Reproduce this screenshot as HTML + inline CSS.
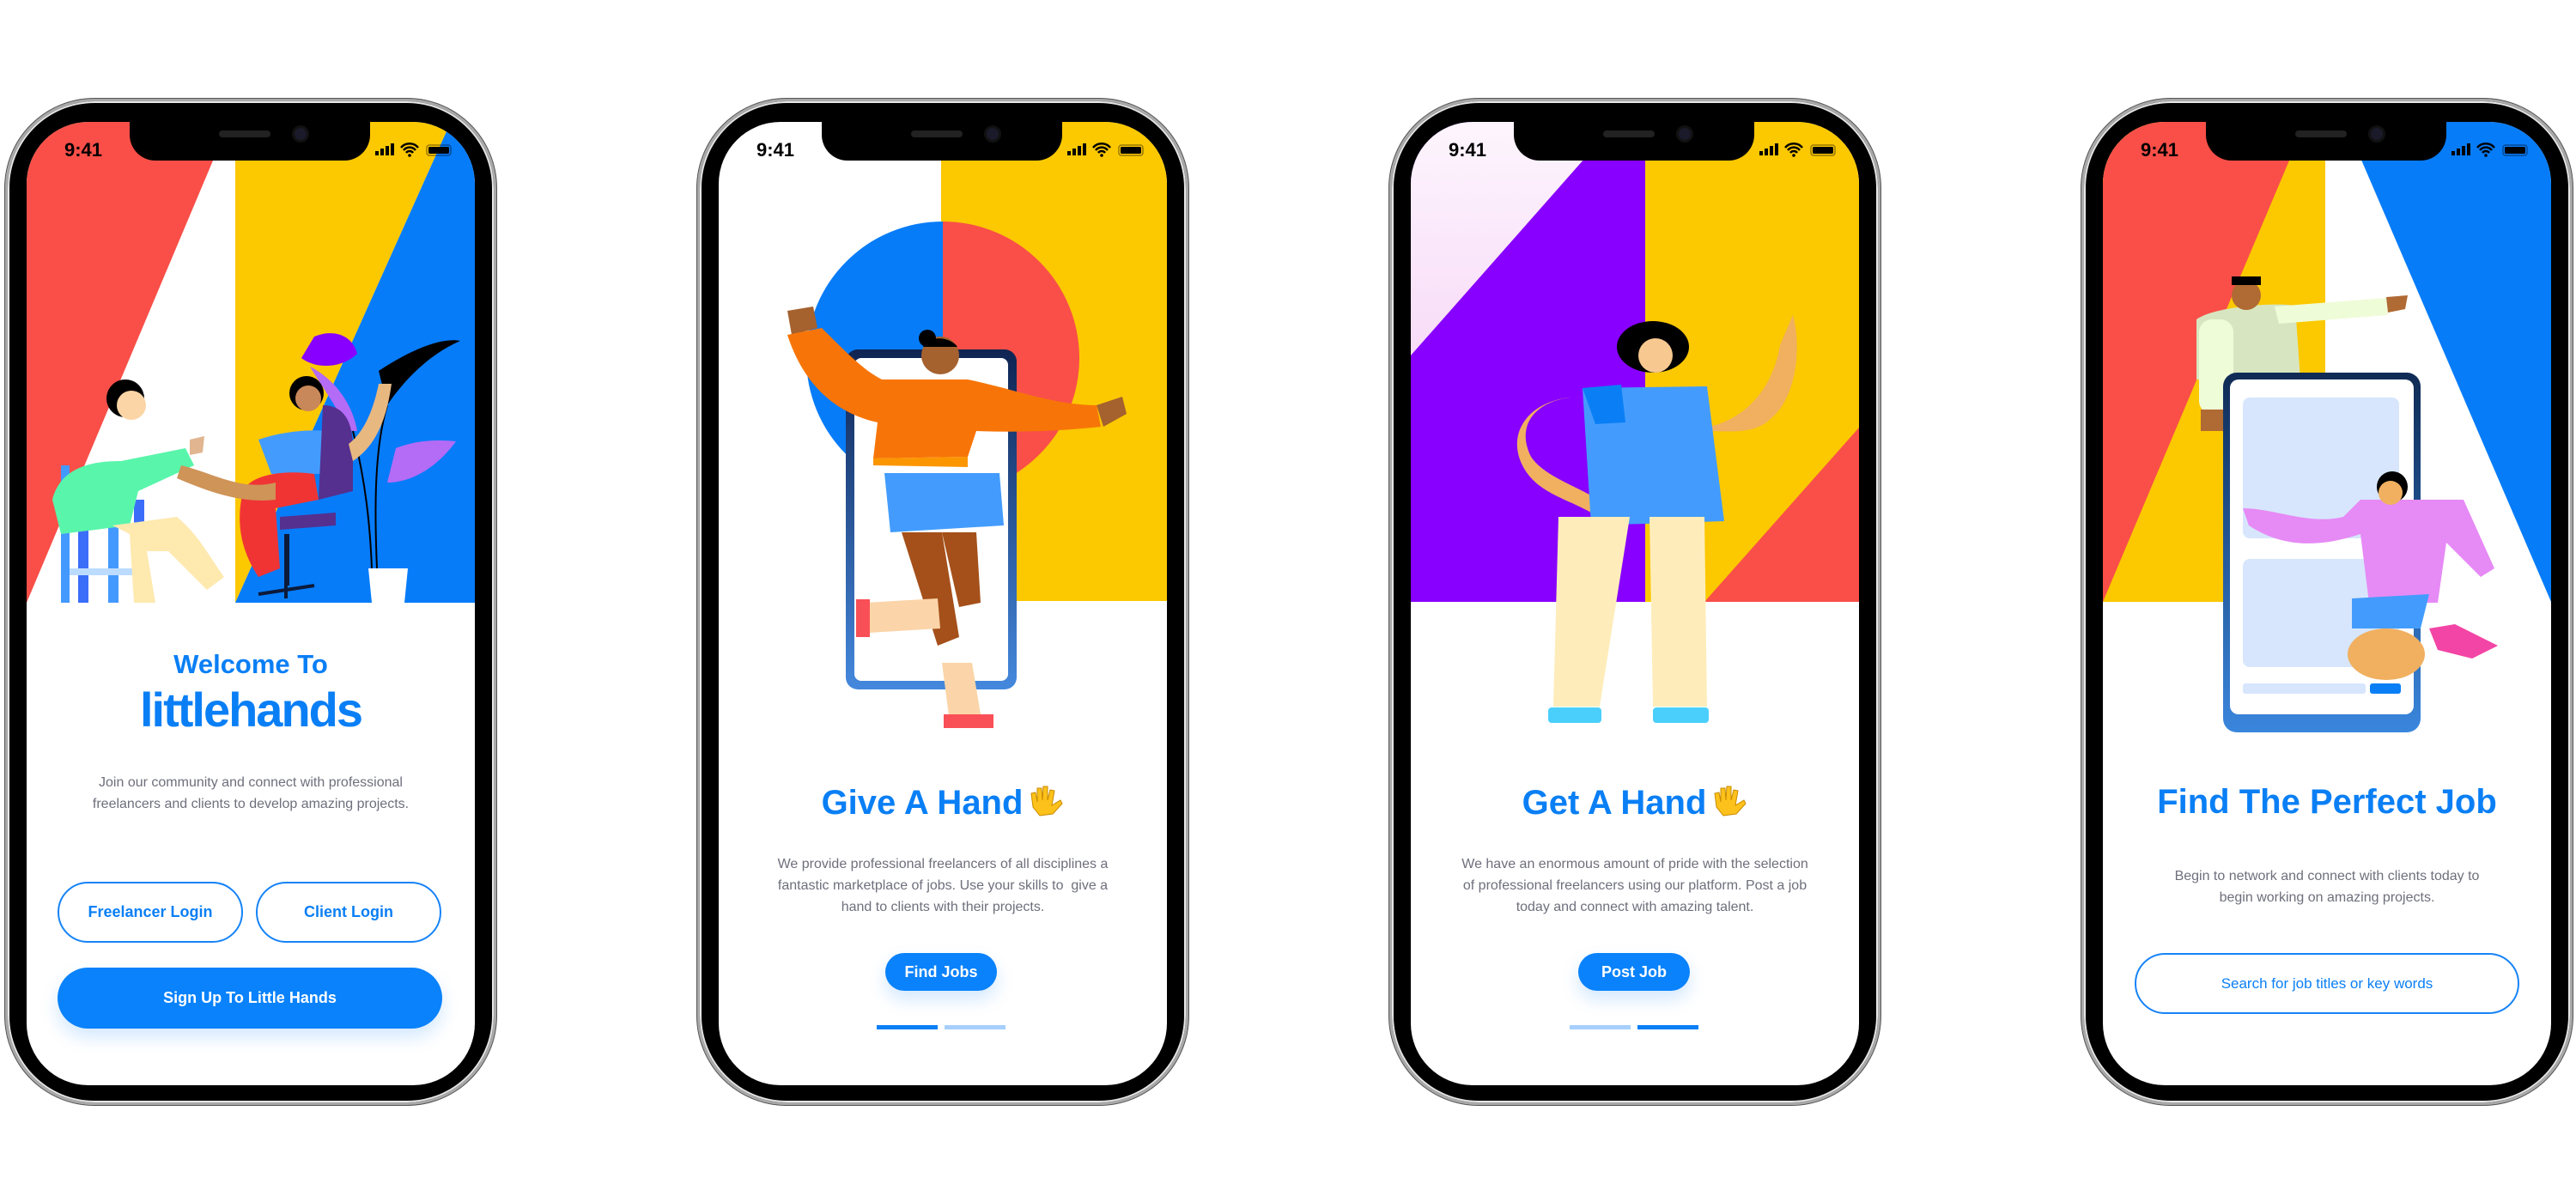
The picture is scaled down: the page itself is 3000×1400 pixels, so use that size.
<!DOCTYPE html>
<html><head><meta charset="utf-8">
<style>
*{margin:0;padding:0;box-sizing:border-box}
body{width:3000px;height:1400px;background:#fff;position:relative;overflow:hidden;font-family:"Liberation Sans",sans-serif}
.ph{position:absolute;top:115px;width:572px;height:1172px;border-radius:104px;background:#000;border:3px solid #a9a9a9;box-shadow:0 0 0 2px #e6e6e6 inset,0 0 0 1px #555}
.sc{position:absolute;left:22px;top:24px;width:522px;height:1122px;border-radius:72px;overflow:hidden;background:#fff}
.notch{position:absolute;left:120px;top:0;width:280px;height:45px;background:#000;border-radius:0 0 30px 30px}
.notch:before{content:"";position:absolute;left:104px;top:10px;width:60px;height:8px;border-radius:4px;background:#222}
.notch:after{content:"";position:absolute;left:192px;top:7px;width:14px;height:14px;border-radius:50%;background:#1a1a2a;box-shadow:0 0 0 3px #111}
.time{position:absolute;left:44px;top:20px;font-weight:bold;font-size:22px;color:#000}
.ic{position:absolute;left:404px;top:25px}
.t{position:absolute;left:0;width:522px;text-align:center}
.h{color:#0a7ff5;font-weight:bold;font-size:40px}
.h svg.em{position:static;display:inline-block;vertical-align:-4px;margin-left:8px}
.p{color:#6e6f7c;font-size:16px;line-height:25px}
.b{position:absolute;border-radius:40px;font-weight:bold;color:#0a7ff5;font-size:18px;text-align:center}
.o{border:2px solid #1683f7;background:#fff}
.f{background:#0982fb;color:#fff;box-shadow:0 10px 20px rgba(9,130,251,.18)}
svg{position:absolute;left:0;top:0}
</style></head><body>

<!-- PHONE 1 -->
<div class="ph" style="left:6px"><div class="sc">
<svg width="522" height="1122">
<polygon points="0,0 236,0 0,560" fill="#f94f48"/>
<polygon points="243,0 494,0 243,560" fill="#fcc800"/>
<polygon points="494,0 522,0 522,560 243,560" fill="#077cf9"/>
<path d="M335,250 C360,240 380,250 385,270 C370,285 340,290 320,275 Z" fill="#8800ff"/>
<path d="M330,285 C360,300 380,330 385,360 L375,360 C360,330 345,310 330,285Z" fill="#b46bf5"/>
<path d="M430,380 C455,370 480,370 500,372 C480,400 450,420 420,420Z" fill="#b46bf5"/>
<path d="M410,290 C440,270 480,250 505,255 C470,270 440,300 420,330Z" fill="#000"/>
<path d="M420,330 C405,380 405,450 408,520 M380,360 C395,420 400,470 402,520" stroke="#000" stroke-width="2" fill="none"/>
<path d="M398,520 L444,520 L440,560 L402,560Z" fill="#fff"/>
<rect x="40" y="400" width="10" height="160" fill="#4499ff"/><rect x="60" y="440" width="12" height="120" fill="#3b6ef8"/>
<rect x="95" y="440" width="12" height="120" fill="#4499ff"/><rect x="125" y="440" width="12" height="120" fill="#3b6ef8"/>
<rect x="50" y="520" width="90" height="8" fill="#bcdcff"/>
<path d="M30,440 C40,400 80,395 110,395 L185,380 L195,400 L130,430 L120,470 L40,480 Z" fill="#59f5ab"/>
<path d="M100,470 L175,460 C200,480 215,510 230,530 L210,545 L165,500 L140,500 L150,560 L125,560 L120,480Z" fill="#fee9af"/>
<circle cx="115" cy="322" r="22" fill="#000"/><circle cx="122" cy="330" r="17" fill="#fbd5a5"/>
<path d="M190,370 L207,366 L205,385 L190,388Z" fill="#e0b590"/>
<path d="M270,370 C300,360 330,358 355,360 L370,360 L365,410 L285,410 Z" fill="#439cfd"/>
<path d="M250,440 C250,410 300,405 335,410 L340,440 L290,450 L295,520 L270,530 C250,500 245,470 250,440Z" fill="#f03434"/>
<path d="M345,330 C370,330 380,350 380,380 L380,430 L340,440 Z" fill="#55308f"/>
<path d="M295,460 L360,455 L360,470 L295,475Z" fill="#55308f"/>
<rect x="300" y="480" width="6" height="60" fill="#0c1a3a"/>
<path d="M270,550 L335,540 M302,540 L302,555" stroke="#0c1a3a" stroke-width="4"/>
<circle cx="326" cy="316" r="20" fill="#000"/><circle cx="328" cy="322" r="15" fill="#c9885a"/>
<path d="M180,400 C220,410 250,430 290,420 L290,440 C250,445 210,430 175,415Z" fill="#ce9458"/>
<path d="M375,375 C395,360 405,330 410,305 L425,305 C420,340 410,375 380,395Z" fill="#e8b881"/>
</svg>
<div class="notch"></div><div class="time">9:41</div>
<svg class="ic" style="left:404px;top:24px" width="96" height="18"><rect x="2" y="10" width="4" height="5"/><rect x="8" y="7" width="4" height="8"/><rect x="14" y="4" width="4" height="11"/><rect x="20" y="1" width="4" height="14"/><path d="M32,6 A13,13 0 0 1 52,6 M35,9 A9,9 0 0 1 49,9 M38,12 A5,5 0 0 1 46,12" stroke="#000" stroke-width="2.5" fill="none"/><circle cx="42" cy="15" r="1.8"/><rect x="62" y="3" width="28" height="12" rx="3" fill="none" stroke="#000" stroke-opacity=".4" stroke-width="1.5"/><rect x="64" y="5" width="24" height="8" rx="1.5"/></svg>
<div class="t h" style="top:614px;font-size:31px;font-weight:900">Welcome To</div>
<div class="t h" style="top:652px;font-size:56px;font-weight:900;letter-spacing:-2px">littlehands</div>
<div class="t p" style="top:757px">Join our community and connect with professional<br>freelancers and clients to develop amazing projects.</div>
<div class="b o" style="left:36px;top:885px;width:216px;height:71px;line-height:67px">Freelancer Login</div>
<div class="b o" style="left:267px;top:885px;width:216px;height:71px;line-height:67px">Client Login</div>
<div class="b f" style="left:36px;top:985px;width:448px;height:71px;line-height:71px">Sign Up To Little Hands</div>
</div></div>

<!-- PHONE 2 -->
<div class="ph" style="left:812px"><div class="sc">
<svg width="522" height="1122">
<rect x="259" y="0" width="263" height="558" fill="#fcc800"/>
<path d="M261,116 A159,159 0 0 0 261,434Z" fill="#077cf9"/>
<path d="M261,116 A159,159 0 0 1 261,434Z" fill="#f94f48"/>
<defs><linearGradient id="g2" x1="0" y1="0" x2="0" y2="1"><stop offset="0" stop-color="#0f2452"/><stop offset="1" stop-color="#4488dd"/></linearGradient></defs>
<rect x="148" y="265" width="199" height="396" rx="14" fill="url(#g2)"/>
<rect x="158" y="275" width="179" height="376" rx="8" fill="#fff"/>
<path d="M80,220 L110,215 L115,240 L85,248Z" fill="#a5612e"/>
<path d="M80,248 L120,240 C150,270 170,290 190,300 L290,300 C340,310 390,330 440,330 L445,355 C400,360 350,362 300,360 L290,390 L180,392 L185,350 C140,340 100,310 80,248Z" fill="#f77508"/>
<path d="M180,392 L290,390 L290,402 L180,400Z" fill="#fb9600"/>
<path d="M440,330 L470,320 L475,340 L448,355Z" fill="#a5612e"/>
<path d="M193,409 L327,409 L332,470 L200,478Z" fill="#439cfd"/>
<path d="M213,478 L260,478 L280,600 L255,610Z" fill="#a5501a"/>
<path d="M260,478 L300,478 L305,560 L280,565Z" fill="#a5501a"/>
<path d="M170,560 L255,555 L258,590 L175,595Z" fill="#fbd5a9"/>
<rect x="160" y="556" width="16" height="44" fill="#f94f56"/>
<path d="M260,630 L295,630 L305,690 L268,692Z" fill="#fbd5a9"/>
<rect x="262" y="690" width="58" height="16" fill="#f94f56"/>
<circle cx="258" cy="272" r="22" fill="#a5612e"/><circle cx="243" cy="252" r="10" fill="#000"/>
<path d="M238,262 C245,248 270,250 278,262 L260,262Z" fill="#000"/>
</svg>
<div class="notch"></div><div class="time">9:41</div>
<svg class="ic" style="left:404px;top:24px" width="96" height="18"><rect x="2" y="10" width="4" height="5"/><rect x="8" y="7" width="4" height="8"/><rect x="14" y="4" width="4" height="11"/><rect x="20" y="1" width="4" height="14"/><path d="M32,6 A13,13 0 0 1 52,6 M35,9 A9,9 0 0 1 49,9 M38,12 A5,5 0 0 1 46,12" stroke="#000" stroke-width="2.5" fill="none"/><circle cx="42" cy="15" r="1.8"/><rect x="62" y="3" width="28" height="12" rx="3" fill="none" stroke="#000" stroke-opacity=".4" stroke-width="1.5"/><rect x="64" y="5" width="24" height="8" rx="1.5"/></svg>
<div class="t h" style="top:770px">Give A Hand<svg class="em" width="40" height="40" viewBox="0 0 40 40"><path d="M4,28 L2,12 L7,11 L9,22 L9,6 L14,6 L15,20 L16,4 L21,4 L21,20 L24,8 L29,9 L26,26 L36,20 L38,24 L27,36 L12,38 Z" fill="#fcc21b" stroke="#c98a00" stroke-width="1"/></svg></div>
<div class="t p" style="top:852px">We provide professional freelancers of all disciplines a<br>fantastic marketplace of jobs. Use your skills to &nbsp;give a<br>hand to clients with their projects.</div>
<div class="b f" style="left:194px;top:968px;width:130px;height:44px;line-height:44px">Find Jobs</div>
<div style="position:absolute;left:184px;top:1052px;width:71px;height:5px;background:#0a7ff5"></div>
<div style="position:absolute;left:263px;top:1052px;width:71px;height:5px;background:#a6cffc"></div>
</div></div>

<!-- PHONE 3 -->
<div class="ph" style="left:1618px"><div class="sc">
<svg width="522" height="1122">
<defs><linearGradient id="g3" x1="0" y1="0" x2="0" y2="1"><stop offset="0" stop-color="#fdf5fd"/><stop offset="1" stop-color="#f8dcf8"/></linearGradient></defs>
<rect x="0" y="0" width="273" height="559" fill="#8800ff"/>
<polygon points="0,0 240,0 0,272" fill="url(#g3)"/>
<rect x="273" y="0" width="249" height="559" fill="#fcc800"/>
<polygon points="522,356 522,559 342,559" fill="#f94f48"/>
<path d="M342,356 C380,350 420,320 430,260 L445,225 C455,260 450,320 420,345 C400,365 370,360 342,360Z" fill="#f0b060"/>
<path d="M200,320 C150,320 120,350 140,390 C160,420 220,430 242,460 L230,470 C200,440 150,440 130,400 C110,360 140,320 200,320Z" fill="#f0b060"/>
<path d="M200,310 L345,308 L365,465 L210,470Z" fill="#439cfd"/>
<path d="M200,310 L245,306 L250,350 L215,352Z" fill="#0a7ff5"/>
<path d="M172,460 L255,460 L220,681 L166,681Z" fill="#feedbb"/>
<path d="M278,460 L342,460 L345,681 L282,681Z" fill="#feedbb"/>
<rect x="160" y="682" width="62" height="18" rx="4" fill="#4acffc"/>
<rect x="282" y="682" width="65" height="18" rx="4" fill="#4acffc"/>
<ellipse cx="282" cy="262" rx="42" ry="30" fill="#000"/><circle cx="285" cy="272" r="20" fill="#f7c890"/>
</svg>
<div class="notch"></div><div class="time">9:41</div>
<svg class="ic" style="left:404px;top:24px" width="96" height="18"><rect x="2" y="10" width="4" height="5"/><rect x="8" y="7" width="4" height="8"/><rect x="14" y="4" width="4" height="11"/><rect x="20" y="1" width="4" height="14"/><path d="M32,6 A13,13 0 0 1 52,6 M35,9 A9,9 0 0 1 49,9 M38,12 A5,5 0 0 1 46,12" stroke="#000" stroke-width="2.5" fill="none"/><circle cx="42" cy="15" r="1.8"/><rect x="62" y="3" width="28" height="12" rx="3" fill="none" stroke="#000" stroke-opacity=".4" stroke-width="1.5"/><rect x="64" y="5" width="24" height="8" rx="1.5"/></svg>
<div class="t h" style="top:770px">Get A Hand<svg class="em" width="40" height="40" viewBox="0 0 40 40"><path d="M4,28 L2,12 L7,11 L9,22 L9,6 L14,6 L15,20 L16,4 L21,4 L21,20 L24,8 L29,9 L26,26 L36,20 L38,24 L27,36 L12,38 Z" fill="#fcc21b" stroke="#c98a00" stroke-width="1"/></svg></div>
<div class="t p" style="top:852px">We have an enormous amount of pride with the selection<br>of professional freelancers using our platform. Post a job<br>today and connect with amazing talent.</div>
<div class="b f" style="left:195px;top:968px;width:130px;height:44px;line-height:44px">Post Job</div>
<div style="position:absolute;left:185px;top:1052px;width:71px;height:5px;background:#a6cffc"></div>
<div style="position:absolute;left:264px;top:1052px;width:71px;height:5px;background:#0a7ff5"></div>
</div></div>

<!-- PHONE 4 -->
<div class="ph" style="left:2424px"><div class="sc">
<svg width="522" height="1122">
<polygon points="0,0 259,0 259,559 0,559" fill="#fcc800"/>
<polygon points="0,0 236,0 0,559" fill="#f94f48"/>
<polygon points="282,0 522,0 522,559" fill="#077cf9"/>
<defs><linearGradient id="g4" x1="0" y1="0" x2="0" y2="1"><stop offset="0" stop-color="#0f2b55"/><stop offset="1" stop-color="#3a86dd"/></linearGradient></defs>
<path d="M109,230 C130,215 200,210 224,214 L230,300 L109,300Z" fill="#d7e6c0"/>
<path d="M200,215 L330,205 L332,225 L205,235Z" fill="#effcd8"/>
<path d="M330,204 L355,202 L352,218 L332,222Z" fill="#b06a33"/>
<rect x="112" y="230" width="40" height="110" rx="15" fill="#effcd8"/>
<rect x="114" y="335" width="28" height="25" fill="#b06a33"/>
<circle cx="167" cy="202" r="17" fill="#b06a33"/><rect x="150" y="180" width="34" height="10" fill="#000"/>
<rect x="140" y="292" width="230" height="419" rx="16" fill="url(#g4)"/>
<rect x="148" y="300" width="214" height="390" rx="10" fill="#fff"/>
<rect x="163" y="321" width="182" height="164" rx="8" fill="#d7e6fd"/>
<rect x="163" y="509" width="182" height="126" rx="8" fill="#d7e6fd"/>
<rect x="163" y="654" width="143" height="12" rx="3" fill="#d7e6fd"/>
<rect x="311" y="654" width="36" height="12" rx="3" fill="#0a7ff5"/>
<path d="M163,450 C200,450 240,470 280,460 L300,440 L420,440 L456,520 L440,530 L400,490 L390,560 L310,560 L300,480 C240,500 200,490 170,470Z" fill="#e68af5"/>
<path d="M290,555 L380,550 L370,590 L290,590Z" fill="#439cfd"/>
<ellipse cx="330" cy="620" rx="45" ry="30" fill="#f0b060"/>
<path d="M380,590 L410,585 L460,610 L430,625 L390,615Z" fill="#f345a5"/>
<circle cx="337" cy="425" r="18" fill="#000"/><circle cx="335" cy="432" r="14" fill="#f0b060"/>
</svg>
<div class="notch"></div><div class="time">9:41</div>
<svg class="ic" style="left:404px;top:24px" width="96" height="18"><rect x="2" y="10" width="4" height="5"/><rect x="8" y="7" width="4" height="8"/><rect x="14" y="4" width="4" height="11"/><rect x="20" y="1" width="4" height="14"/><path d="M32,6 A13,13 0 0 1 52,6 M35,9 A9,9 0 0 1 49,9 M38,12 A5,5 0 0 1 46,12" stroke="#000" stroke-width="2.5" fill="none"/><circle cx="42" cy="15" r="1.8"/><rect x="62" y="3" width="28" height="12" rx="3" fill="none" stroke="#000" stroke-opacity=".4" stroke-width="1.5"/><rect x="64" y="5" width="24" height="8" rx="1.5"/></svg>
<div class="t h" style="top:770px">Find The Perfect Job</div>
<div class="t p" style="top:866px">Begin to network and connect with clients today to<br>begin working on amazing projects.</div>
<div class="b o" style="left:37px;top:968px;width:448px;height:71px;line-height:67px;font-weight:normal;font-size:17px">Search for job titles or key words</div>
</div></div>
</body></html>
